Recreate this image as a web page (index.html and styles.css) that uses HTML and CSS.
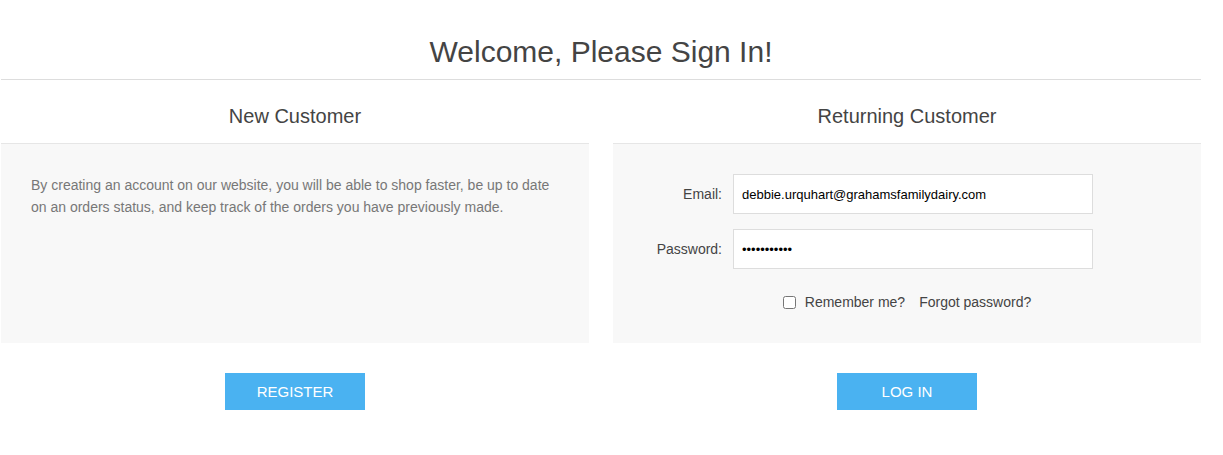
FILE: index.html
```html
<!DOCTYPE html>
<html lang="en">
<head>
<meta charset="utf-8">
<title>Sign In</title>
<link rel="stylesheet" href="styles.css">
</head>
<body>
<div class="page">
  <div class="page-title"><h1>Welcome, Please Sign In!</h1></div>
  <div class="columns">
    <div class="col">
      <div class="col-head"><h2>New Customer</h2></div>
      <div class="panel">
        <p class="intro">By creating an account on our website, you will be able to shop faster, be up to date on an orders status, and keep track of the orders you have previously made.</p>
      </div>
      <div class="actions"><button class="btn" type="button">Register</button></div>
    </div>
    <div class="col">
      <div class="col-head"><h2>Returning Customer</h2></div>
      <div class="panel form">
        <div class="row">
          <label class="lbl" for="email">Email:</label>
          <input class="field" id="email" type="text" value="debbie.urquhart@grahamsfamilydairy.com">
        </div>
        <div class="row">
          <label class="lbl" for="pw">Password:</label>
          <input class="field" id="pw" type="password" value="abcdefghijk">
        </div>
        <div class="remember">
          <input class="check" type="checkbox" id="rem">
          <label for="rem">Remember me?</label>
          <a class="forgot" href="#">Forgot password?</a>
        </div>
      </div>
      <div class="actions"><button class="btn" type="button">Log in</button></div>
    </div>
  </div>
</div>
</body>
</html>
```

FILE: styles.css
```css
html, body {
  margin: 0;
  padding: 0;
  background: #fff;
}
body {
  font-family: "Liberation Sans", Arial, sans-serif;
  color: #444;
}
.page {
  width: 1200px;
  margin-left: 1px;
}
.page-title {
  border-bottom: 1px solid #ddd;
  padding: 35px 0 10px;
  text-align: center;
}
.page-title h1 {
  margin: 0;
  font-size: 30px;
  line-height: 34px;
  font-weight: normal;
  color: #444;
}
.columns {
  display: flex;
  gap: 24px;
}
.col {
  flex: 1 1 0;
  display: flex;
  flex-direction: column;
}
.col-head {
  padding: 24px 0 15px;
  border-bottom: 1px solid #e6e6e6;
  text-align: center;
}
.col-head h2 {
  margin: 0;
  font-size: 20px;
  line-height: 24px;
  font-weight: normal;
  color: #444;
}
.panel {
  background: #f8f8f8;
  height: 199px;
  box-sizing: border-box;
  padding: 30px;
}
.intro {
  margin: 0;
  font-size: 14px;
  line-height: 22px;
  color: #777;
}
.form {
  display: flex;
  flex-direction: column;
  gap: 15px;
  padding: 30px 0;
}
.row {
  display: flex;
  align-items: center;
  gap: 11px;
}
.lbl {
  width: 109px;
  text-align: right;
  font-size: 14px;
  color: #444;
}
.field {
  width: 360px;
  height: 40px;
  box-sizing: border-box;
  border: 1px solid #ddd;
  background: #fff;
  padding: 0 8px;
  margin: 0;
  font-family: "Liberation Sans", Arial, sans-serif;
  font-size: 13px;
  color: #000;
  outline: none;
}
.remember {
  display: flex;
  justify-content: center;
  align-items: center;
  height: 18px;
  margin-top: 9px;
  font-size: 14px;
  color: #444;
}
.check {
  width: 13px;
  height: 13px;
  margin: 0 9px 0 0;
}
.forgot {
  margin-left: 14px;
  color: #444;
  text-decoration: none;
}
.actions {
  display: flex;
  justify-content: center;
  padding-top: 30px;
}
.btn {
  width: 140px;
  height: 37px;
  border: none;
  background: #4ab2f1;
  color: #fff;
  font-family: "Liberation Sans", Arial, sans-serif;
  font-size: 15px;
  text-transform: uppercase;
  padding: 0;
  cursor: pointer;
}
```
